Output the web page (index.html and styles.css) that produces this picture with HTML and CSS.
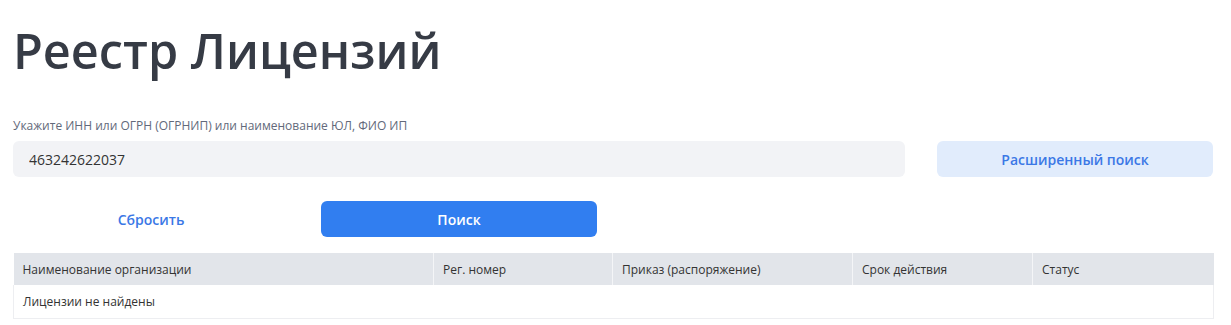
FILE: index.html
```html
<!DOCTYPE html>
<html lang="ru">
<head>
  <meta charset="UTF-8" />
  <title>Реестр Лицензий</title>
  <link rel="stylesheet" href="styles.css">
</head>
<body>
  <div class="page">
    <h1>Реестр Лицензий</h1>

    <form class="search-form" onsubmit="return false">
      <label class="search-label" for="query">Укажите ИНН или ОГРН (ОГРНИП) или наименование ЮЛ, ФИО ИП</label>
      <div class="grid">
        <input class="search-input" id="query" type="text" value="463242622037" />
        <button type="button" class="btn btn-light">Расширенный поиск</button>
        <button type="reset" class="btn btn-link">Сбросить</button>
        <button type="submit" class="btn btn-primary">Поиск</button>
      </div>
    </form>

    <table class="results">
      <colgroup>
        <col class="col-name">
        <col class="col-num">
        <col class="col-order">
        <col class="col-term">
        <col class="col-status">
      </colgroup>
      <thead>
        <tr>
          <th>Наименование организации</th>
          <th>Рег. номер</th>
          <th>Приказ (распоряжение)</th>
          <th>Срок действия</th>
          <th>Статус</th>
        </tr>
      </thead>
      <tbody>
        <tr><td colspan="5">Лицензии не найдены</td></tr>
      </tbody>
    </table>
  </div>
</body>
</html>
```

FILE: styles.css
```css
body {
  margin: 0;
  font-family: 'Open Sans', 'Noto Sans', sans-serif;
  color: #333;
  background: #fff;
}
.page {
  width: 1200px;
  padding: 0 13px;
}
h1 {
  margin: 0;
  padding-top: 17px;
  font-size: 48.6px;
  line-height: 66px;
  font-weight: 600;
  color: #363b45;
}
.search-form {
  margin-top: 35px;
}
.search-label {
  display: block;
  font-size: 12px;
  line-height: 16px;
  color: #62697a;
  margin-bottom: 7px;
}
.grid {
  display: grid;
  grid-template-columns: repeat(4, 276px);
  column-gap: 32px;
  row-gap: 24px;
}
.search-input {
  grid-column: span 3;
  height: 36px;
  box-sizing: border-box;
  border: none;
  border-radius: 6px;
  background: #f2f3f6;
  padding: 0 16px;
  font-family: inherit;
  font-size: 14px;
  color: #333;
  outline: none;
}
.btn {
  height: 36px;
  border: none;
  border-radius: 6px;
  font-family: inherit;
  font-size: 14px;
  font-weight: 600;
  cursor: pointer;
}
.btn-light {
  background: #e1ecfc;
  color: #3b78e6;
}
.btn-link {
  background: transparent;
  color: #3b78e6;
}
.btn-primary {
  background: #317ef0;
  color: #fff;
}
.results {
  width: 1200px;
  table-layout: fixed;
  margin-top: 16px;
  border-collapse: collapse;
  font-size: 12px;
}
.results th {
  background: #e2e5ea;
  font-weight: 400;
  text-align: left;
  height: 32px;
  padding: 0 9px;
  border-left: 1px solid #f4f5f7;
  color: #333;
}
.results th:first-child {
  border-left: none;
}
.results td {
  height: 33px;
  padding: 0 9px;
  border: 1px solid #edeef1;
  border-top: none;
}
.col-name { width: 420px; }
.col-num { width: 179px; }
.col-order { width: 240px; }
.col-term { width: 180px; }
.col-status { width: 181px; }
```
